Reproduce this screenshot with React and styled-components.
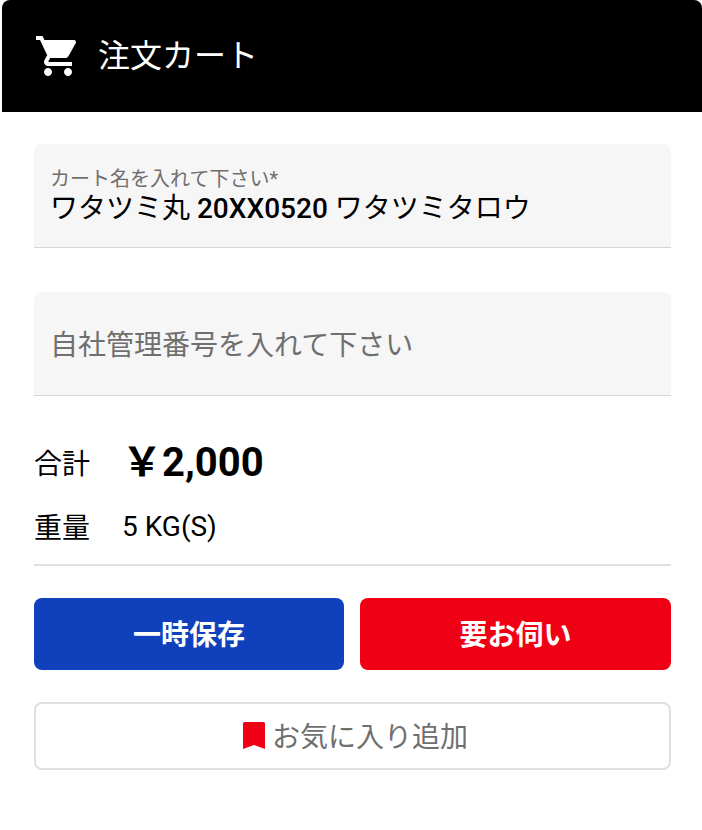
import styled, { createGlobalStyle } from "styled-components";

const GlobalStyle = createGlobalStyle`
  html, body {
    margin: 0;
    padding: 0;
    background: #fff;
  }
  body {
    font-family: Roboto, "Noto Sans CJK JP", sans-serif;
  }
`;

const Panel = styled.div`
  width: 700px;
  margin-left: 2px;
`;

const Header = styled.header`
  height: 112px;
  background: #000;
  border-radius: 8px 8px 0 0;
  display: flex;
  align-items: center;
  padding-left: 32px;
  gap: 16px;
  color: #fff;
`;

const HeaderTitle = styled.h1`
  margin: 0;
  font-size: 32px;
  font-weight: 400;
  line-height: 1;
`;

const Body = styled.div`
  padding: 32px 30px 0 32px;
  width: 637px;
`;

const Field = styled.div`
  height: 103px;
  background: #f6f6f6;
  border-radius: 8px 8px 0 0;
  border-bottom: 1px solid #d6d6d6;
  padding: 0 16px 0 17px;
  display: flex;
  flex-direction: column;
  justify-content: ${(p) => (p.$filled ? "flex-start" : "center")};
  margin-bottom: ${(p) => p.$gap || 0}px;
`;

const FieldLabel = styled.div`
  font-size: 20px;
  line-height: 24px;
  margin-top: 23px;
  margin-left: -1px;
  color: #6f6f6f;
`;

const FieldValue = styled.div`
  font-size: 28px;
  line-height: 32px;
  margin-top: 2px;
  margin-left: -1px;
  color: #000;
`;

const ValueCode = styled.span`
  font-weight: 500;
`;

const Placeholder = styled.div`
  font-size: 28px;
  line-height: 32px;
  margin-top: 4px;
  margin-left: -1px;
  color: #6f6f6f;
`;

const Summary = styled.div`
  display: flex;
  flex-direction: column;
  gap: 24px;
  padding: 46px 0 18px;
`;

const SummaryRow = styled.div`
  display: flex;
  align-items: center;
  height: 40px;
`;

const SummaryLabel = styled.span`
  font-size: 28px;
  width: 88px;
  color: #000;
`;

const Price = styled.span`
  font-size: 40px;
  font-weight: 700;
  margin-bottom: 6px;
  color: #000;
`;

const Weight = styled.span`
  font-size: 28px;
  color: #000;
`;

const Divider = styled.hr`
  margin: 0;
  border: 0;
  height: 2px;
  background: #e0e0e0;
`;

const Actions = styled.div`
  display: grid;
  grid-template-columns: 310px 311px;
  gap: 16px;
  margin-top: 32px;
`;

const ActionButton = styled.button`
  height: 72px;
  border: 0;
  border-radius: 8px;
  background: ${(p) => p.$color};
  color: #fff;
  font-family: inherit;
  font-size: 28px;
  font-weight: 700;
  padding: 0 0 3px;
`;

const FavoriteButton = styled.button`
  width: 100%;
  height: 68px;
  margin-top: 32px;
  border: 2px solid #e0e0e0;
  border-radius: 8px;
  background: #fff;
  color: #6f6f6f;
  font-family: inherit;
  font-size: 28px;
  display: flex;
  align-items: center;
  justify-content: center;
  gap: 7px;
  padding: 0 0 3px 6px;
`;

const BookmarkSvg = styled.svg`
  margin-top: 1px;
`;

const CartIcon = () => (
  <svg width="48" height="48" viewBox="0 0 24 24" fill="#fff" aria-hidden="true">
    <path d="M7 18c-1.1 0-1.99.9-1.99 2S5.9 22 7 22s2-.9 2-2-.9-2-2-2zM1 2v2h2l3.6 7.59-1.35 2.45c-.16.28-.25.61-.25.96 0 1.1.9 2 2 2h12v-2H7.42c-.14 0-.25-.11-.25-.25l.03-.12.9-1.63h7.45c.75 0 1.41-.41 1.75-1.03l3.58-6.49c.08-.14.12-.31.12-.48 0-.55-.45-1-1-1H5.21l-.94-2H1zm16 16c-1.1 0-1.99.9-1.99 2s.89 2 1.99 2 2-.9 2-2-.9-2-2-2z" />
  </svg>
);

const BookmarkIcon = () => (
  <BookmarkSvg width="22" height="27" viewBox="0 0 22 27" fill="#f00014" aria-hidden="true">
    <path d="M1.5 0h19A1.5 1.5 0 0 1 22 1.5V27l-11-4-11 4V1.5A1.5 1.5 0 0 1 1.5 0z" />
  </BookmarkSvg>
);

export default function App() {
  return (
    <>
      <GlobalStyle />
      <Panel>
        <Header>
          <CartIcon />
          <HeaderTitle>注文カート</HeaderTitle>
        </Header>
        <Body>
          <Field $filled $gap={44}>
            <FieldLabel>カート名を入れて下さい*</FieldLabel>
            <FieldValue>
              ワタツミ丸 <ValueCode>20XX0520</ValueCode> ワタツミタロウ
            </FieldValue>
          </Field>
          <Field>
            <Placeholder>自社管理番号を入れて下さい</Placeholder>
          </Field>
          <Summary>
            <SummaryRow>
              <SummaryLabel>合計</SummaryLabel>
              <Price>￥2,000</Price>
            </SummaryRow>
            <SummaryRow>
              <SummaryLabel>重量</SummaryLabel>
              <Weight>5 KG(S)</Weight>
            </SummaryRow>
          </Summary>
          <Divider />
          <Actions>
            <ActionButton $color="#1040bb">一時保存</ActionButton>
            <ActionButton $color="#f00014">要お伺い</ActionButton>
          </Actions>
          <FavoriteButton>
            <BookmarkIcon />
            お気に入り追加
          </FavoriteButton>
        </Body>
      </Panel>
    </>
  );
}
